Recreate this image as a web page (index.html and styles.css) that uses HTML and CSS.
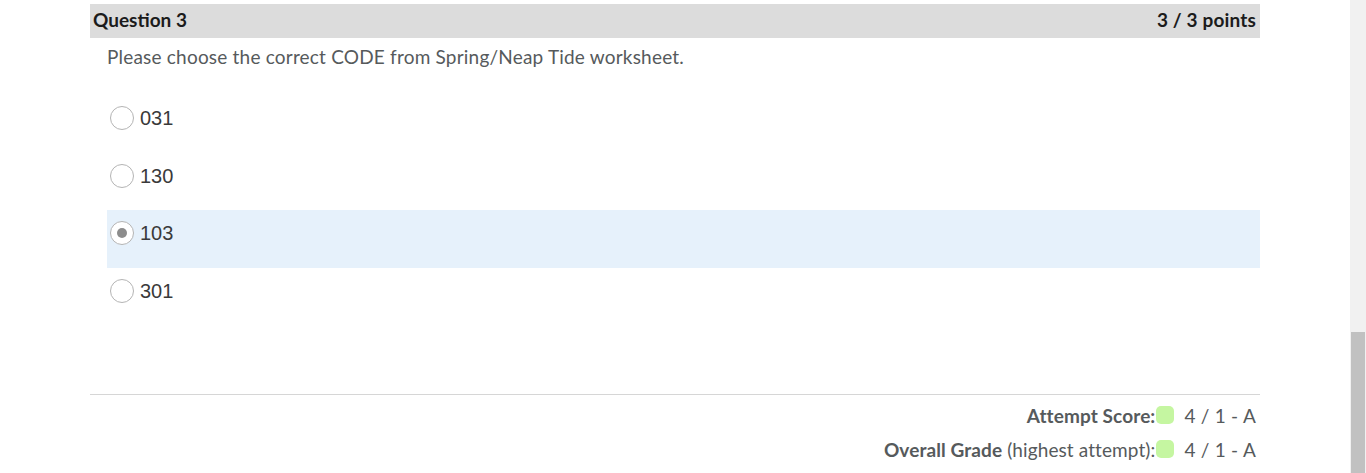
FILE: index.html
```html
<!DOCTYPE html>
<html>
<head>
<meta charset="utf-8">
<link rel="stylesheet" href="styles.css">
</head>
<body>
<div class="page">
  <div class="q-header">
    <span class="q-title">Question 3</span>
    <span class="q-points">3 / 3 points</span>
  </div>
  <div class="q-text">Please choose the correct CODE from Spring/Neap Tide worksheet.</div>
  <div class="options">
    <div class="option"><span class="radio"></span><span class="opt-label">031</span></div>
    <div class="option"><span class="radio"></span><span class="opt-label">130</span></div>
    <div class="option selected"><span class="radio checked"></span><span class="opt-label">103</span></div>
    <div class="option"><span class="radio"></span><span class="opt-label">301</span></div>
  </div>
  <div class="divider"></div>
  <div class="scores">
    <div class="score-row"><b>Attempt Score:</b><span class="badge"></span><span class="val">4 / 1 - A</span></div>
    <div class="score-row"><b>Overall Grade</b>&nbsp;(highest attempt):<span class="badge"></span><span class="val">4 / 1 - A</span></div>
  </div>
</div>
<div class="scrollbar"><div class="thumb"></div></div>
</body>
</html>
```
FILE: styles.css
```css
html, body {
  margin: 0;
  padding: 0;
  background: #fff;
  font-family: Lato, "Open Sans", sans-serif;
  overflow: hidden;
}
.page {
  margin-left: 90px;
  width: 1170px;
  padding-top: 4px;
}
.q-header {
  height: 34px;
  box-sizing: border-box;
  background: #dcdcdc;
  display: flex;
  justify-content: space-between;
  align-items: center;
  padding: 0 4px 3px 3px;
  font-weight: 700;
  font-size: 19px;
  color: #1b1b1b;
}
.q-points {
  letter-spacing: 0.15px;
}
.q-text {
  margin-top: 7px;
  padding-left: 17px;
  font-size: 19px;
  letter-spacing: 0.2px;
  line-height: 24px;
  color: #565a5c;
}
.options {
  margin-top: 26px;
  margin-left: 17px;
}
.option {
  height: 57.5px;
  box-sizing: border-box;
  padding: 11px 0 0 3px;
  display: flex;
  align-items: flex-start;
}
.option.selected {
  background: #e6f1fb;
}
.radio {
  width: 24px;
  height: 24px;
  box-sizing: border-box;
  border: 1px solid #b4b4b4;
  border-radius: 50%;
  background: #fff;
  display: flex;
  align-items: center;
  justify-content: center;
  flex: none;
}
.radio.checked::after {
  content: "";
  width: 10px;
  height: 10px;
  border-radius: 50%;
  background: #8c8c8c;
}
.opt-label {
  margin-left: 6px;
  font-family: "Liberation Sans", Arial, sans-serif;
  font-size: 20px;
  line-height: 24px;
  color: #3a3a3a;
}
.divider {
  margin-top: 69px;
  height: 1px;
  background: #d6d6d6;
}
.scores {
  margin-top: 3px;
  padding-right: 4px;
  display: flex;
  flex-direction: column;
  align-items: flex-end;
}
.score-row {
  height: 34px;
  display: flex;
  align-items: center;
  font-size: 19px;
  letter-spacing: 0.1px;
  color: #565a5c;
}
.score-row b {
  font-weight: 700;
}
.badge {
  width: 18px;
  height: 18px;
  border-radius: 5px;
  background: #c5f6a1;
  margin-left: 1px;
  margin-right: 10px;
}
.val {
  letter-spacing: 0.25px;
}
.scrollbar {
  position: fixed;
  top: 0;
  right: 0;
  width: 16px;
  height: 100%;
  background: #f1f1f1;
}
.thumb {
  position: absolute;
  top: 332px;
  left: 1px;
  right: 1px;
  bottom: 0;
  background: #c1c1c1;
}
```
